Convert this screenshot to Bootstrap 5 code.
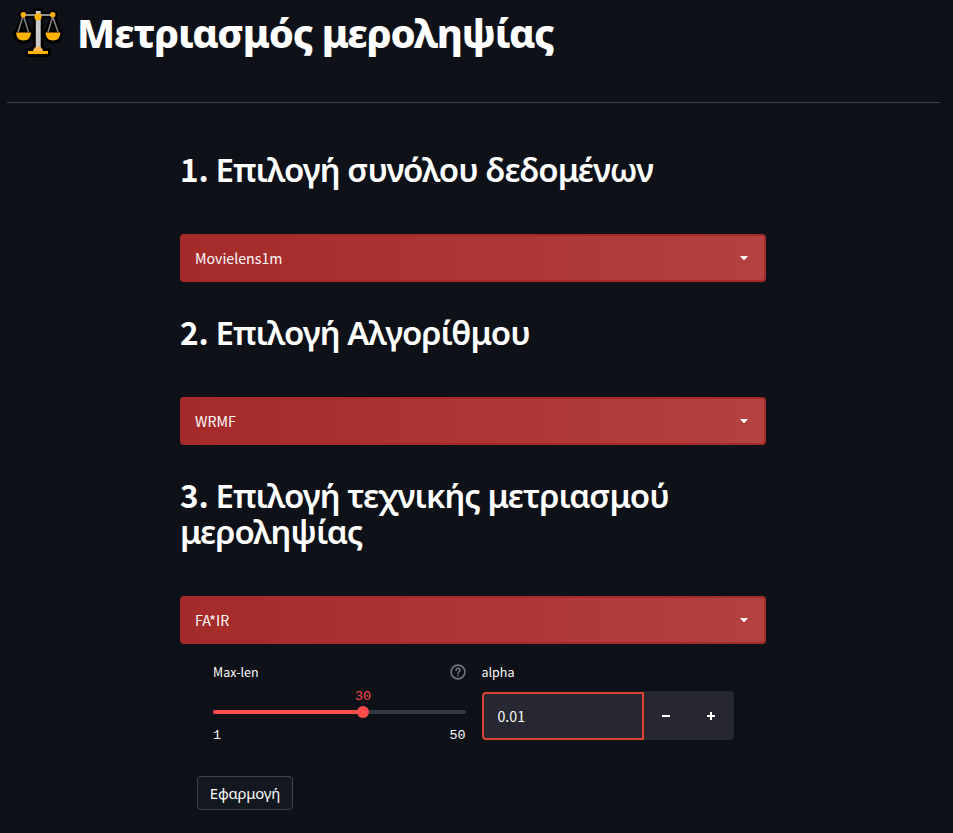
<!DOCTYPE html>
<html lang="el" data-bs-theme="dark">
<head>
<meta charset="utf-8">
<meta name="viewport" content="width=device-width, initial-scale=1">
<title>Μετριασμός μεροληψίας</title>
<link href="https://cdn.jsdelivr.net/npm/bootstrap@5.3.0/dist/css/bootstrap.min.css" rel="stylesheet">
<style>
body{background:#0e1117;color:#fafafa;font-family:"Noto Sans CJK SC","Noto Sans",sans-serif;font-size:14.2px;line-height:1.5;height:833px;overflow:hidden}
.page-head{height:102px;padding:7px 0 0 13px}
.page-head svg{width:50px;height:51px;flex:none}
.page-title{font:800 40px/52px "Noto Sans",sans-serif;margin:0 0 0 14px;letter-spacing:-1.15px;white-space:nowrap}
.rule{height:1px;background:#3e4044;margin:0 13px 0 7px}
.panel{width:586px;margin-left:180px;padding-top:49px}
.step-title{font:600 33px/36px "Noto Sans",sans-serif;margin:0 0 46px;letter-spacing:-.93px;white-space:nowrap}
.step-no{display:inline-block;width:35.5px;font:700 31.5px/30px "Noto Sans CJK SC",sans-serif;letter-spacing:0}
.choice{height:48px;border:2px solid #a52a2a;border-radius:4px;background:linear-gradient(90deg,#a52a2a,#b44141);padding:0 16px 0 13px;color:#fafafa;margin-bottom:33px;width:100%}
.choice span,.num span{padding-top:2px}
.choice svg{width:8px;height:4px}
.params{padding:0 32px 0 33px;gap:16px}
.params>div{width:253px}
.lbl{font-size:12.5px;line-height:20px;height:20px}
.lbl span{line-height:16px}
.mono{font-family:"Liberation Mono",monospace;font-size:13.4px;line-height:20px}
.track{height:4px;border-radius:4px;margin-top:6px;background:linear-gradient(90deg,#ff4b4b 59.2%,#373842 59.2%)}
.knob{width:12px;height:12px;border-radius:50%;background:#ff4b4b;top:-4px;left:144px}
.knob-val{color:#ff4b4b;padding-left:142px;line-height:18px;height:16px}
.limits{margin-top:12px;height:19px}
.num{width:162px;height:48px;margin-top:1px;background:#262730;border:2px solid #dd4335;border-radius:4px 0 0 4px;padding:0 14px;color:#fafafa}
.stepper{width:90px;height:49px;background:#262730;border-radius:0 4px 4px 0}
.stepper button{width:45px;height:49px;background:none;border:0;padding:0 0 2px}
.alpha-row{margin-top:7px}
.apply{font:400 14.9px/20px "Noto Sans",sans-serif;width:96px;height:34px;background:#131720;border:1px solid #41444c;border-radius:4px;color:#fafafa;padding:0;margin:31px 0 0 17px;letter-spacing:-.2px}
</style>
</head>
<body>
<header class="page-head d-flex align-items-start">
<svg viewBox="0 0 50 51">
<g fill="#000" stroke="#000" stroke-width="6" stroke-linejoin="round"><path fill="none" d="M10 8H40M10 8L5 25M10 8L15.500 25M40 8L35 25M40 8L45 25"/><path d="M23 4h4.500v37H23zM3 25.500h15q-.5 8-7.500 8t-7.500-8zM32.500 25.500h15q-.5 8-7.500 8t-7.500-8zM20 44q1-4.500 5-4.500t5 4.500zM15 44h20v3H15z"/><circle cx="10.300" cy="7.800" r="2"/><circle cx="39.700" cy="7.800" r="2"/><circle cx="25" cy="9.800" r="3"/></g>
<path d="M10 8H40" stroke="#b5b5b5" stroke-width="1.600"/>
<path d="M10 9L5 25M10.500 9L15.500 25M40 9L35 25M39.500 9L45 25" stroke="#858585" stroke-width="1.500"/>
<path d="M22.800 4h4.900v37h-4.900z" fill="#ccc"/>
<path d="M3 25.500h15q-.5 8-7.500 8t-7.500-8zM32.500 25.500h15q-.5 8-7.500 8t-7.500-8z" fill="#ffb300"/>
<path d="M20 44q1-4.500 5-4.500t5 4.500z" fill="#ffb950"/><path d="M15 44h20v3H15z" fill="#ffb300"/>
<circle cx="10.300" cy="7.800" r="2.700" fill="#ffb300"/><circle cx="39.700" cy="7.800" r="2.700" fill="#ffb300"/><circle cx="25" cy="9.800" r="3.600" fill="#ffb300"/>
</svg>
<h1 class="page-title">Μετριασμός μεροληψίας</h1>
</header>
<div class="rule"></div>
<main class="panel">
<h2 class="step-title"><span class="step-no">1.</span>Επιλογή συνόλου δεδομένων</h2>
<button class="choice d-flex align-items-center justify-content-between"><span>Movielens1m</span><svg viewBox="0 0 8 4"><path d="M0 0h8L4.700 3.700q-.7.5-1.400 0z" fill="#fff"/></svg></button>
<h2 class="step-title"><span class="step-no">2.</span>Επιλογή Αλγορίθμου</h2>
<button class="choice d-flex align-items-center justify-content-between"><span>WRMF</span><svg viewBox="0 0 8 4"><path d="M0 0h8L4.700 3.700q-.7.5-1.400 0z" fill="#fff"/></svg></button>
<h2 class="step-title"><span class="step-no">3.</span>Επιλογή τεχνικής μετριασμού<br>μεροληψίας</h2>
<button class="choice d-flex align-items-center justify-content-between mb-0"><span>FA*IR</span><svg viewBox="0 0 8 4"><path d="M0 0h8L4.700 3.700q-.7.5-1.400 0z" fill="#fff"/></svg></button>
<section class="params d-flex pt-3">
<div>
<div class="lbl d-flex justify-content-between mt-1 mb-1"><span>Max-len</span>
<svg width="16" height="16" viewBox="0 0 16 16" fill="none" stroke="#71747b" stroke-width="1.600"><circle cx="8" cy="8" r="6.900"/><path d="M6 6.300q.2-2 2-2t2 1.700q0 1-1 1.600T8 9.200M8 11.200v.600" stroke-linecap="round"/></svg></div>
<div class="knob-val mono">30</div>
<div class="track position-relative"><span class="knob position-absolute"></span></div>
<div class="limits mono d-flex justify-content-between"><span>1</span><span>50</span></div>
</div>
<div>
<div class="lbl d-flex mt-1"><span>alpha</span></div>
<div class="alpha-row d-flex"><div class="num d-flex align-items-center"><span>0.01</span></div>
<div class="stepper d-flex"><button><svg width="8" height="8" viewBox="0 0 8 8"><path d="M0 4h8" stroke="#fff" stroke-width="2"/></svg></button><button><svg width="8" height="8" viewBox="0 0 8 8"><path d="M0 4h8M4 0v8" stroke="#fff" stroke-width="2"/></svg></button></div></div>
</div>
</section>
<button class="apply">Εφαρμογή</button>
</main>
<script src="https://cdn.jsdelivr.net/npm/bootstrap@5.3.0/dist/js/bootstrap.bundle.min.js"></script>
</body>
</html>
